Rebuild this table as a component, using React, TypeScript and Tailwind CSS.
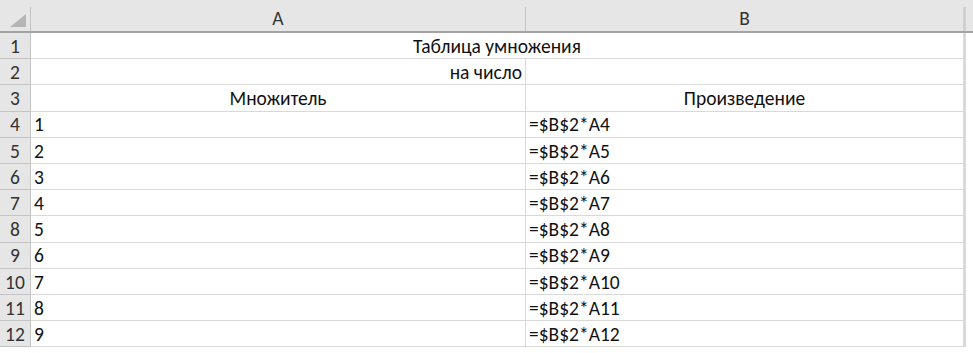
import React from "react";

type Row = { n: number; a?: string; b?: string; aAlign?: "left" | "center" | "right"; bAlign?: "left" | "center" | "right"; merged?: string };

const rows: Row[] = [
  { n: 1, merged: "Таблица умножения" },
  { n: 2, a: "на число", aAlign: "right" },
  { n: 3, a: "Множитель", aAlign: "center", b: "Произведение", bAlign: "center" },
  ...[1, 2, 3, 4, 5, 6, 7, 8, 9].map((v, i) => ({
    n: i + 4,
    a: String(v),
    aAlign: "left" as const,
    b: `=$B$2*A${i + 4}`,
    bAlign: "left" as const,
  })),
];

const alignCls = {
  left: "justify-start pl-[3px]",
  center: "justify-center",
  right: "justify-end pr-[3px]",
};

export default function App() {
  return (
    <div
      className="w-[973px] h-[353px] bg-white overflow-hidden text-[19.5px] leading-none text-[#111]"
      style={{ fontFamily: "Carlito, Calibri, 'Liberation Sans', sans-serif" }}
    >
      {/* column headers */}
      <div className="flex h-[33px] bg-[#e6e6e6] border-b-2 border-[#a3a3a3]">
        <div className="relative w-[31px] shrink-0 pt-[7px]">
          <div className="h-full border-r border-[#c4c4c4]" />
          <svg className="absolute left-[10px] top-[14px]" width="16" height="13" viewBox="0 0 16 13">
            <polygon points="16,0 16,13 0,13" fill="#b5b5b5" />
          </svg>
        </div>
        <div className="w-[495px] shrink-0 pt-[7px]">
          <div className="h-full flex items-center justify-center border-r border-[#c4c4c4] text-[#333]">A</div>
        </div>
        <div className="w-[440px] shrink-0 pt-[7px]">
          <div className="h-full flex items-center justify-center border-r-[3px] border-[#d0d0d0] text-[#333]">B</div>
        </div>
        <div className="flex-1" />
      </div>

      {rows.map((r) => (
        <div key={r.n} className="flex h-[26.2px]">
          <div className="w-[31px] shrink-0 bg-[#e6e6e6] border-r border-b border-[#c4c4c4] flex items-center justify-center pt-[2px] text-[#333]">
            {r.n}
          </div>
          {r.merged ? (
            <div className="w-[935px] shrink-0 flex items-center justify-center pt-[2px] border-b border-r-[3px] border-[#d9d9d9]">
              {r.merged}
            </div>
          ) : (
            <>
              <div
                className={`w-[495px] shrink-0 flex items-center pt-[2px] border-b border-r border-[#d9d9d9] ${alignCls[r.aAlign ?? "left"]}`}
              >
                {r.a}
              </div>
              <div
                className={`w-[440px] shrink-0 flex items-center pt-[2px] border-b border-r-[3px] border-[#d9d9d9] ${alignCls[r.bAlign ?? "left"]}`}
              >
                {r.b}
              </div>
            </>
          )}
          <div className="flex-1" />
        </div>
      ))}
    </div>
  );
}
